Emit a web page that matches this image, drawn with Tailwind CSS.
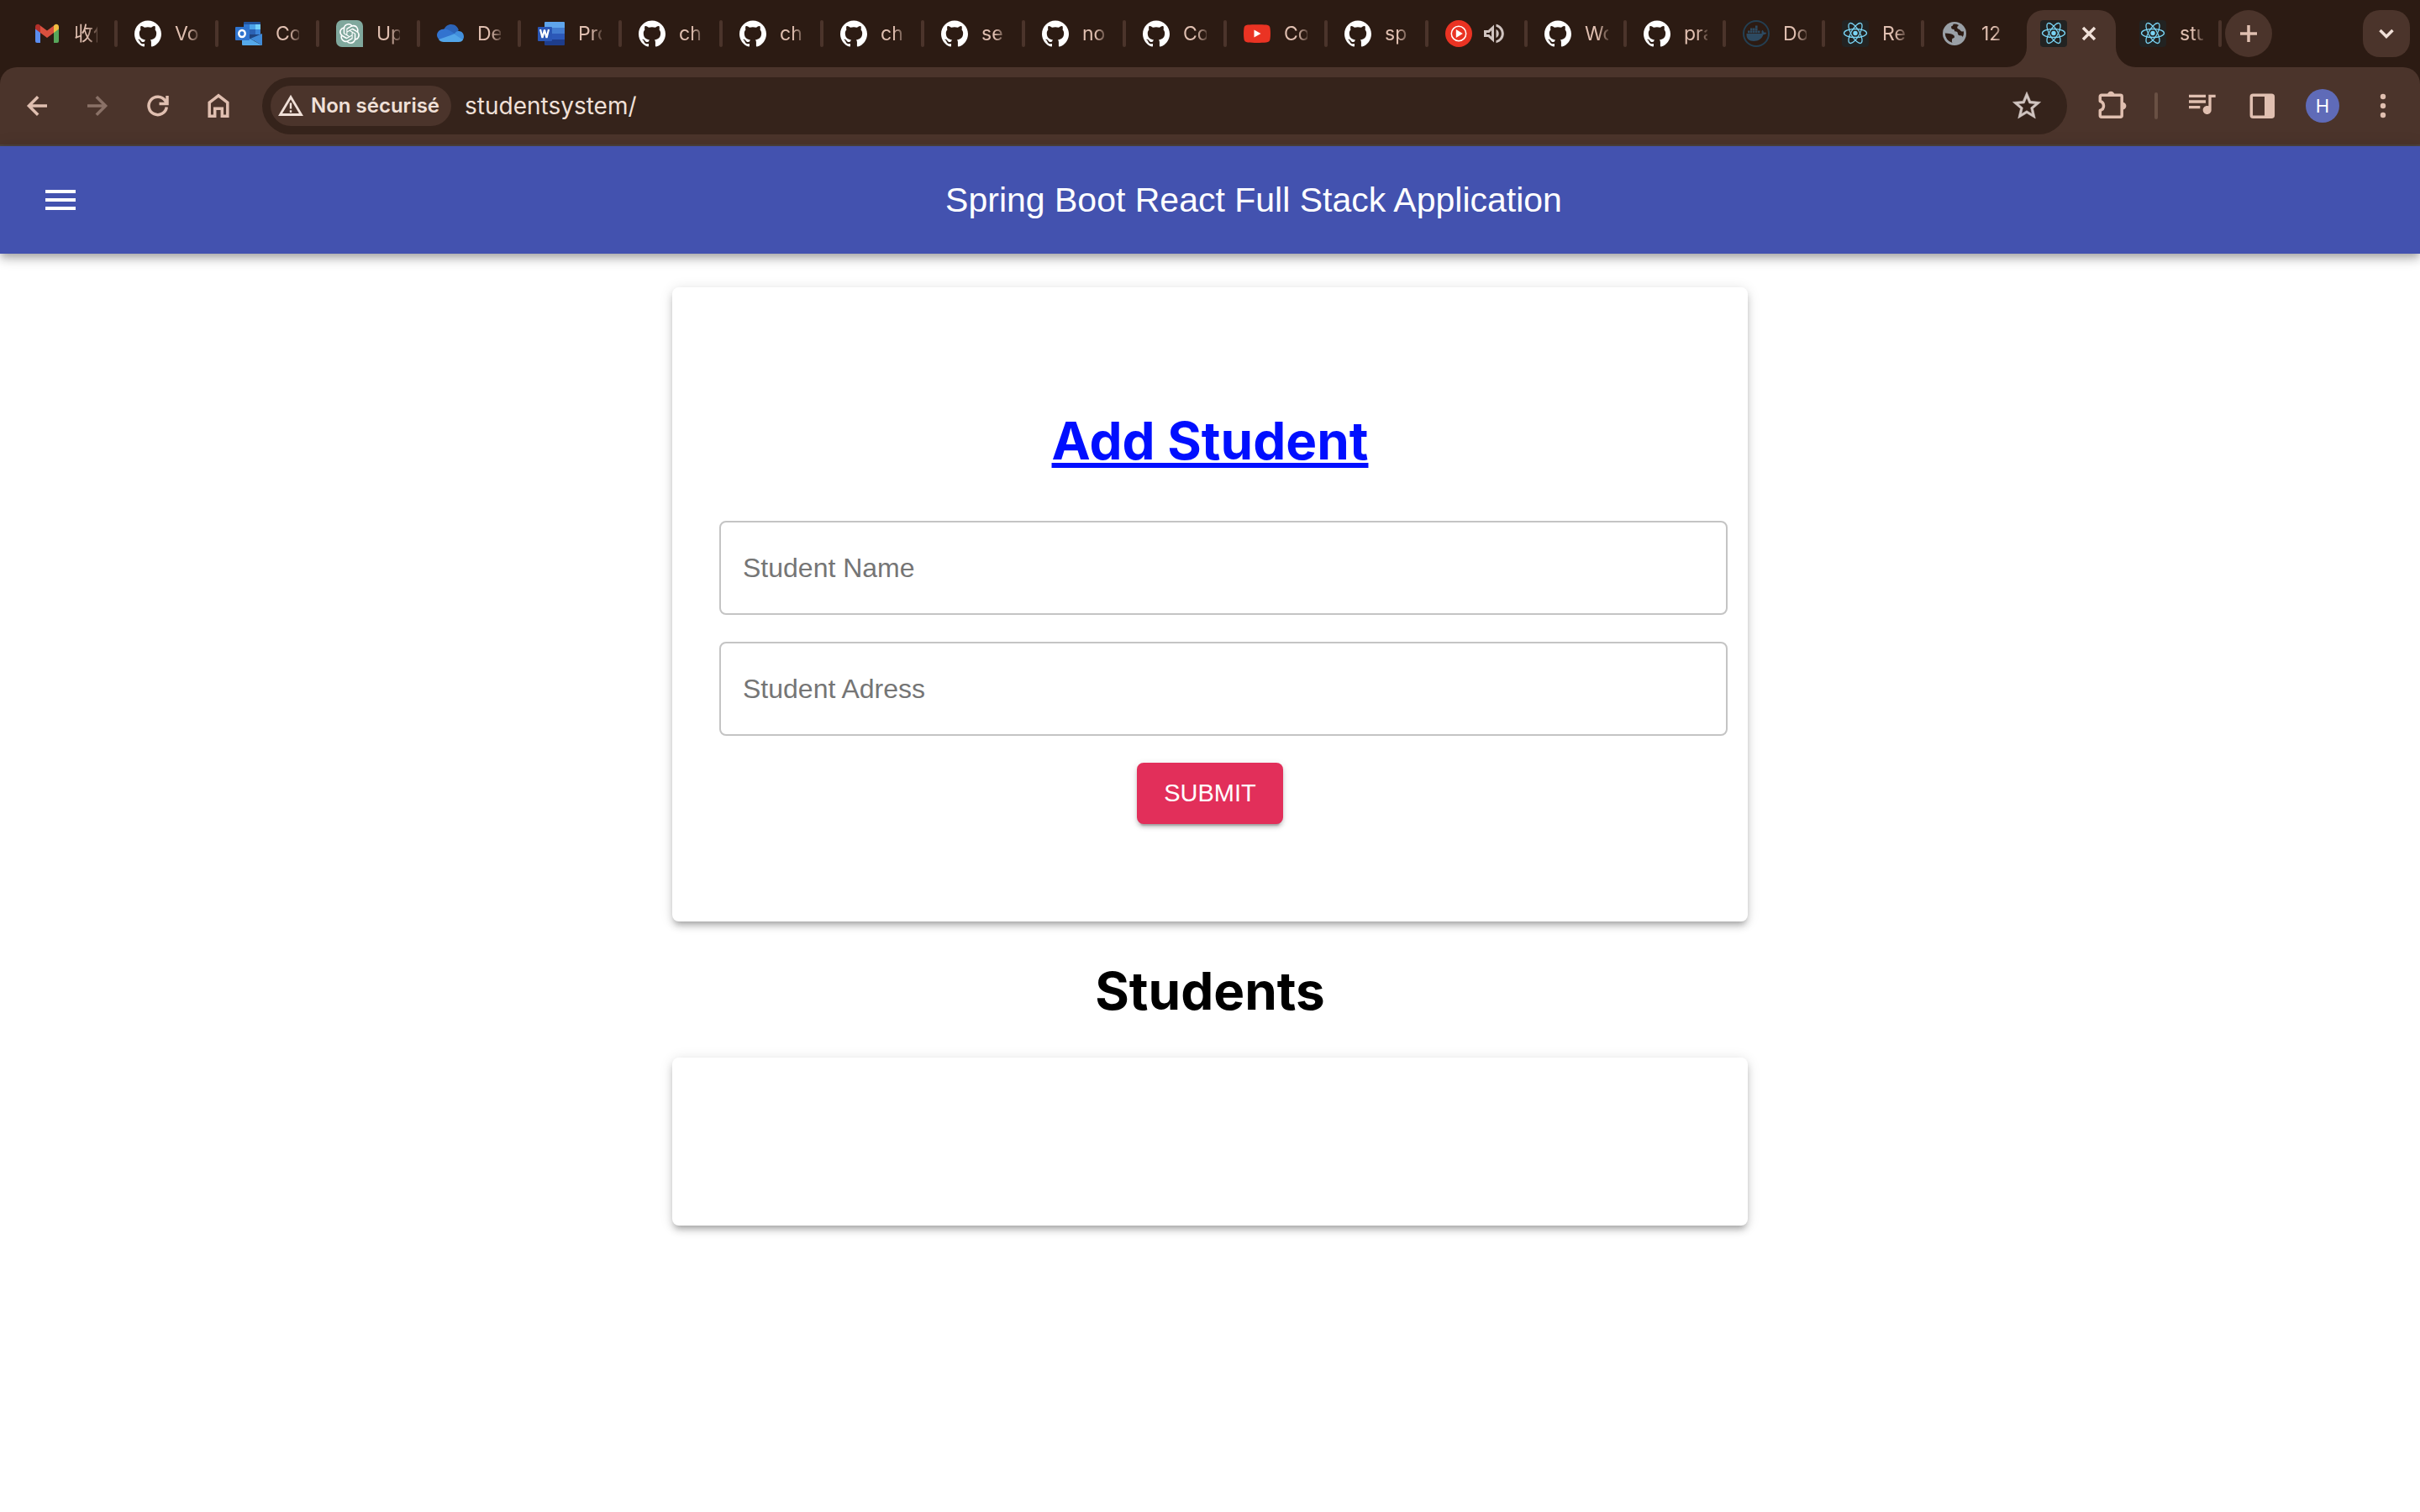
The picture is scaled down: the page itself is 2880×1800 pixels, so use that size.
<!DOCTYPE html>
<html lang="fr">
<head>
<meta charset="utf-8">
<meta name="viewport" content="width=device-width, initial-scale=1">
<title>studentsystem</title>
<script src="https://cdn.jsdelivr.net/npm/@tailwindcss/browser@4"></script>
</head>
<body class="min-h-screen bg-white font-['Inter','Noto_Sans_CJK_SC',sans-serif] text-black">

<!-- Favicon symbols -->
<svg class="hidden" aria-hidden="true">
  <symbol id="gmail" viewBox="0 0 32 32">
    <path fill="#5b8def" d="M2 9l6 4.5V27H4a2 2 0 0 1-2-2z"/>
    <path fill="#57a75b" d="M30 9l-6 4.5V27h4a2 2 0 0 0 2-2z"/>
    <path fill="#d9503f" d="M8 6.5l8 6 8-6v8.500l-8 6-8-6z"/>
    <path fill="#b3302a" d="M8 15L2 10.500V8c0-2.800 3.200-4 5-2.500l1 1z"/>
    <path fill="#f2bd42" d="M24 15l6-4.500V8c0-2.800-3.200-4-5-2.500l-1 1z"/>
  </symbol>
  <symbol id="github" viewBox="0 0 24 24">
    <path fill="#fff" d="M12 .297c-6.63 0-12 5.373-12 12 0 5.303 3.438 9.8 8.205 11.385.6.113.82-.258.82-.577 0-.285-.01-1.04-.015-2.04-3.338.724-4.042-1.61-4.042-1.61C4.422 18.07 3.633 17.7 3.633 17.7c-1.087-.744.084-.729.084-.729 1.205.084 1.838 1.236 1.838 1.236 1.07 1.835 2.809 1.305 3.495.998.108-.776.417-1.305.76-1.605-2.665-.3-5.466-1.332-5.466-5.93 0-1.31.465-2.38 1.235-3.22-.135-.303-.54-1.523.105-3.176 0 0 1.005-.322 3.3 1.23.96-.267 1.98-.399 3-.405 1.02.006 2.04.138 3 .405 2.28-1.552 3.285-1.23 3.285-1.23.645 1.653.24 2.873.12 3.176.765.84 1.23 1.91 1.23 3.22 0 4.61-2.805 5.625-5.475 5.92.42.36.81 1.096.81 2.22 0 1.606-.015 2.896-.015 3.286 0 .315.21.69.825.57C20.565 22.092 24 17.592 24 12.297c0-6.627-5.373-12-12-12"/>
  </symbol>
  <symbol id="outlook" viewBox="0 0 32 32">
    <path fill="#21529b" d="M10 3a1 1 0 0 1 1-1h18a1 1 0 0 1 1 1v2H10z"/>
    <path fill="#2f77d2" d="M10 5h7v6h-7z"/>
    <path fill="#4ba3ea" d="M17 5h7v6h-7z"/>
    <path fill="#73d0fa" d="M24 5h6v6h-6z"/>
    <path fill="#2b62b5" d="M17 11h7v6h-7z"/>
    <path fill="#3c85d8" d="M24 11h6v6h-6z"/>
    <path fill="#1f4480" d="M10 17h14l7 0-11 9-10-5z"/>
    <path fill="#3f8ad8" d="M32 16v14L18 22z"/>
    <path fill="#55a9ea" d="M8 17l24 13H9a1 1 0 0 1-1-1z"/>
    <rect x="0" y="8" width="17" height="16" rx="1" fill="#2f74cf"/>
    <ellipse cx="8" cy="16" rx="3.700" ry="4" fill="none" stroke="#fff" stroke-width="2.500"/>
  </symbol>
  <symbol id="openai" viewBox="0 0 32 32">
    <path fill="#80a89d" d="M7 0h18a7 7 0 0 1 7 7v25H7a7 7 0 0 1-7-7V7a7 7 0 0 1 7-7z"/>
    <svg x="4" y="4" width="24" height="24" viewBox="0 0 24 24"><path fill="#fff" d="M22.2819 9.8211a5.9847 5.9847 0 0 0-.5157-4.9108 6.0462 6.0462 0 0 0-6.5098-2.9A6.0651 6.0651 0 0 0 4.9807 4.1818a5.9847 5.9847 0 0 0-3.9977 2.9 6.0462 6.0462 0 0 0 .7427 7.0966 5.98 5.98 0 0 0 .511 4.9107 6.051 6.051 0 0 0 6.5146 2.9001A5.9847 5.9847 0 0 0 13.2599 24a6.0557 6.0557 0 0 0 5.7718-4.2058 5.9894 5.9894 0 0 0 3.9977-2.9001 6.0557 6.0557 0 0 0-.7475-7.0729zm-9.022 12.6081a4.4755 4.4755 0 0 1-2.8764-1.0408l.1419-.0804 4.7783-2.7582a.7948.7948 0 0 0 .3927-.6813v-6.7369l2.02 1.1686a.071.071 0 0 1 .038.052v5.5826a4.504 4.504 0 0 1-4.4945 4.4944zm-9.6607-4.1254a4.4708 4.4708 0 0 1-.5346-3.0137l.142.0852 4.783 2.7582a.7712.7712 0 0 0 .7806 0l5.8428-3.3685v2.3324a.0804.0804 0 0 1-.0332.0615L9.74 19.9502a4.4992 4.4992 0 0 1-6.1408-1.6464zM2.3408 7.8956a4.485 4.485 0 0 1 2.3655-1.9728V11.6a.7664.7664 0 0 0 .3879.6765l5.8144 3.3543-2.0201 1.1685a.0757.0757 0 0 1-.071 0l-4.8303-2.7865A4.504 4.504 0 0 1 2.3408 7.872zm16.5963 3.8558L13.1038 8.364 15.1192 7.2a.0757.0757 0 0 1 .071 0l4.8303 2.7913a4.4944 4.4944 0 0 1-.6765 8.1042v-5.6772a.79.79 0 0 0-.407-.667zm2.0107-3.0231l-.142-.0852-4.7735-2.7818a.7759.7759 0 0 0-.7854 0L9.409 9.2297V6.8974a.0662.0662 0 0 1 .0284-.0615l4.8303-2.7866a4.4992 4.4992 0 0 1 6.6802 4.66zM8.3065 12.863l-2.02-1.1638a.0804.0804 0 0 1-.038-.0567V6.0742a4.4992 4.4992 0 0 1 7.3757-3.4537l-.142.0805L8.704 5.459a.7948.7948 0 0 0-.3927.6813zm1.0976-2.3654l2.602-1.4998 2.6069 1.4998v2.9994l-2.5974 1.4997-2.6067-1.4997Z"/></svg>
  </symbol>
  <symbol id="onedrive" viewBox="0 0 32 32">
    <path fill="#2c64b8" d="M8 12c1.500-4.500 5-7 9-7 4.500 0 7.800 2.800 8.800 7l-6 6-11-2z"/>
    <path fill="#3273cf" d="M9 10.500c2.200 0 4 .6 5.600 1.600L22 16.500 5 24.500c-3-1.400-5-4-5-6.500 0-4.500 4-7.500 9-7.500z"/>
    <path fill="#428fdc" d="M21 16c1.500-2.500 3.500-3 5-3 3.500 0 6 2.900 6 6.500 0 2-.8 3.700-2 4.800L17 18z"/>
    <path fill="#52a5e8" d="M20.500 16.500L31 23.500c-1.200 1.700-3 2.500-5 2.500H8c-2.600 0-4.600-1-6-3z"/>
  </symbol>
  <symbol id="word" viewBox="0 0 32 32">
    <path fill="#5fa5ec" d="M8 3a1 1 0 0 1 1-1h22a1 1 0 0 1 1 1v6H8z"/>
    <path fill="#427bd0" d="M8 9h24v7H8z"/>
    <path fill="#2c58b8" d="M8 16h24v7H8z"/>
    <path fill="#1e3d8c" d="M8 23h24v6a1 1 0 0 1-1 1H9a1 1 0 0 1-1-1z"/>
    <rect x="0" y="8" width="17" height="17" rx="1" fill="#2a56b5"/>
    <path fill="none" stroke="#fff" stroke-width="2.200" stroke-linejoin="bevel" d="M3 11l2.500 10L8 11.500 10.500 21 13 11"/>
  </symbol>
  <symbol id="youtube" viewBox="0 0 32 32">
    <path fill="#ea3323" d="M5 5.500C11 5 21 5 27 5.500c3 .3 4.300 1.500 4.600 4.500.5 4 .5 8 0 12-.3 3-1.600 4.200-4.600 4.500-6 .6-16 .6-22 0-3-.3-4.300-1.500-4.600-4.500-.5-4-.5-8 0-12C.7 7 2 5.800 5 5.500z"/>
    <path fill="#fff" d="M12.500 11.500v9l8-4.500z"/>
  </symbol>
  <symbol id="ytmusic" viewBox="0 0 32 32">
    <circle cx="16" cy="16" r="16" fill="#ea3323"/>
    <circle cx="16" cy="16" r="8.700" fill="none" stroke="#fff" stroke-width="1.500"/>
    <path fill="#fff" d="M12.800 11v10l8-5z"/>
  </symbol>
  <symbol id="docker" viewBox="0 0 32 32">
    <circle cx="16" cy="16" r="15" fill="none" stroke="#243f52" stroke-width="2"/>
    <path fill="#2d4a61" d="M4.500 16h18.200c-.6-1.600-.4-3 .5-4.200 1.200.8 1.800 1.700 1.900 2.800 1.300-.3 2.500-.1 3.300.5-.7 1.500-2 2.200-3.900 2.200C22.500 22.500 18.500 25 13 25c-5.500 0-9-3-8.500-9zM6 12.500h2.600v2.700H6zm3 0h2.600v2.700H9zm3 0h2.600v2.700H12zm3 0h2.600v2.700H15zm3 0h2.600v2.700H18zm-9-3h2.600v2.700H9zm3 0h2.600v2.700H12zm3 0h2.600v2.700H15zm0-3h2.600v2.700H15z"/>
  </symbol>
  <symbol id="react" viewBox="0 0 32 32">
    <rect width="32" height="32" rx="4" fill="#222322"/>
    <g fill="none" stroke="#7ad4f4" stroke-width="1.300">
      <ellipse cx="16" cy="15.500" rx="13.500" ry="5"/>
      <ellipse cx="16" cy="15.500" rx="13.500" ry="5" transform="rotate(60 16 15.500)"/>
      <ellipse cx="16" cy="15.500" rx="13.500" ry="5" transform="rotate(120 16 15.500)"/>
    </g>
    <circle cx="16" cy="15.500" r="2.700" fill="#7ad4f4"/>
  </symbol>
  <symbol id="globe" viewBox="0 0 32 32">
    <circle cx="16" cy="16" r="14" fill="#9aa0a6"/>
    <path fill="#2c1b13" d="M14.500 4.700c-.2 1.600-.8 2.300-2.300 2.500-.3 2 .2 3.300 2 3.600 1.500.2 2 .9 1.900 2.600 2.400-.2 3.700.8 3.900 2.800.2 1.700 1.800 2 3 2 2 .1 2.500.9 2.700 2a11 11 0 0 0 1.300-7c-1.500.6-3.200.3-4-1-1-1.600-3-1.300-3.600-2.600-.7-1.600.6-2.800 1.700-3.700a11.500 11.500 0 0 0-6.600-1.200zM4.800 15.500c2 .2 4.200.4 6.500.8 2.500.4 4.500 1.500 4.700 3.400.1 1.500-1.500 1.700-2.300 2-.8.400-.4 1.500-.7 2.600-.2.900-.2 1.800.5 2.700A11.500 11.500 0 0 1 4.800 15.500z"/>
  </symbol>
  <symbol id="speaker" viewBox="0 0 24 24">
    <path fill="#d0c4c0" fill-rule="evenodd" d="M0 8h5L12 1.500v21L5 16H0zM3 11v2h3.300l2.700 2.700V8.300L6.300 11zM14.500 7c2.200.8 3.200 2.700 3.200 5s-1 4.200-3.200 5zM14.500.8C19.900 2 23.800 6.500 23.800 12s-3.900 10-9.300 11.200v-2.900c3.700-1.200 6.300-4.400 6.300-8.300s-2.600-7.100-6.300-8.300z"/>
  </symbol>
</svg>

<!-- Browser window -->
<header class="bg-[#2c1b13]">
  <div class="flex h-20 items-center pr-3 pl-5">
    <div id="tabs" role="tablist" class="flex h-20 min-w-0"></div>
    <button aria-label="Nouvel onglet" class="ml-1 grid size-14 shrink-0 place-items-center rounded-full bg-[#4b342b]">
      <svg class="size-5" viewBox="0 0 20 20" fill="none" stroke="#e0bfb0" stroke-width="3.500"><path d="M10 0v20M0 10h20"/></svg>
    </button>
    <button aria-label="Rechercher dans les onglets" class="ml-auto grid size-14 shrink-0 place-items-center rounded-[20px] bg-[#4b342b]">
      <svg class="size-5" viewBox="0 0 20 20" fill="none" stroke="#f0e0d8" stroke-width="3.500"><path d="M2.500 6l7.500 7.500L17.500 6"/></svg>
    </button>
  </div>

  <div class="flex h-[94px] items-center rounded-t-[20px] border-b-2 border-[#4d433f] bg-[#4b342b] px-2 text-[#e0bfb0]">
    <button aria-label="Retour" class="grid h-14 w-[72px] place-items-center"><svg class="size-8" viewBox="0 0 32 32" fill="none" stroke="currentColor" stroke-width="3.500"><path d="M28 16H6.500M17.200 5.200L6.400 16l10.800 10.800"/></svg></button>
    <button aria-label="Avancer" class="grid h-14 w-[72px] place-items-center text-[#8a7167]"><svg class="size-8" viewBox="0 0 32 32" fill="none" stroke="currentColor" stroke-width="3.500"><path d="M4 16h21.500M14.800 5.200L25.600 16 14.800 26.800"/></svg></button>
    <button aria-label="Actualiser" class="grid h-14 w-[72px] place-items-center"><svg class="size-8" viewBox="0 0 32 32" fill="none" stroke="currentColor" stroke-width="3.500"><path d="M26.300 17.500A10.700 10.700 0 1 1 24.500 9.800l2 3M27 4v9.500H17.500"/></svg></button>
    <button aria-label="Accueil" class="grid h-14 w-[72px] place-items-center"><svg class="size-8" viewBox="0 0 32 32" fill="none" stroke="currentColor" stroke-width="3.500"><path d="M5.200 28.200V12L16 3.800 26.800 12v16.200h-6.500V19.200h-8.600v9z"/></svg></button>

    <div class="ml-4 flex h-[68px] min-w-0 flex-1 items-center rounded-full bg-[#35231b] px-[10px] text-[#f0e0d8]">
      <button class="flex h-12 shrink-0 items-center gap-2 rounded-full bg-[#4b342b] px-2 pr-[14px] text-2xl font-semibold">
        <svg class="size-8" viewBox="0 0 32 32" fill="none" stroke="currentColor" stroke-width="2.800"><path d="M16 5.500L28.500 26.500h-25z"/><path d="M16 12.500v7M16 21.300v2.700" stroke-width="2.400"/></svg>
        Non sécurisé
      </button>
      <input type="text" aria-label="Adresse" value="studentsystem/" class="ml-4 min-w-0 flex-1 bg-transparent text-[28px] outline-none">
      <button aria-label="Ajouter aux favoris" class="mr-[18px] shrink-0 text-[#d0c4c0]"><svg class="size-10" viewBox="0 0 24 24" fill="currentColor" stroke="currentColor" stroke-width="0.300"><path d="M22 9.240l-7.190-.62L12 2 9.190 8.630 2 9.240l5.460 4.730L5.820 21 12 17.270 18.180 21l-1.630-7.030L22 9.240zM12 15.400l-3.760 2.270 1-4.280-3.320-2.880 4.380-.38L12 6.100l1.710 4.040 4.380.38-3.320 2.880 1 4.280L12 15.400z"/></svg></button>
    </div>

    <button aria-label="Extensions" class="ml-4 grid h-14 w-[72px] place-items-center"><svg class="size-9 overflow-visible" viewBox="0 0 36 36" fill="none" stroke="currentColor" stroke-width="3.500"><path stroke-linejoin="round" d="M7 5.300H29.500a1.700 1.700 0 0 1 1.700 1.700V29.500a1.700 1.700 0 0 1-1.700 1.700H7a1.700 1.700 0 0 1-1.700-1.700V23.500c2.500-.8 4.200-3 4.200-5.500s-1.700-4.700-4.200-5.500V7A1.700 1.700 0 0 1 7 5.300z"/><path stroke="none" fill="currentColor" d="M14 5a4.200 4.200 0 0 1 8.400 0zM32 13.700a4.400 4.400 0 0 1 0 8.800z"/></svg></button>
    <div class="mx-4 h-8 w-1 rounded-full bg-[#695044]"></div>
    <button aria-label="Contrôle multimédia" class="grid h-14 w-[72px] place-items-center"><svg class="size-10" viewBox="0 2 24 24" fill="currentColor"><path d="M15 6H3v2h12V6zm0 4H3v2h12v-2zM3 16h8v-2H3v2zM17 6v8.180c-.31-.11-.65-.18-1-.18-1.660 0-3 1.340-3 3s1.340 3 3 3 3-1.340 3-3V8h3V6h-5z"/></svg></button>
    <button aria-label="Panneau latéral" class="grid h-14 w-[72px] place-items-center"><svg class="size-8" viewBox="0 0 32 32"><rect x="3.300" y="3.300" width="26" height="26" rx="2" fill="none" stroke="currentColor" stroke-width="3.500"/><path fill="currentColor" d="M19 3h10v26H19z"/></svg></button>
    <button aria-label="Profil" class="grid h-14 w-[72px] place-items-center"><span class="grid size-10 place-items-center rounded-full bg-[#5f6bb8] text-[22px] text-white">H</span></button>
    <button aria-label="Menu" class="grid h-14 w-[72px] place-items-center"><svg class="size-8" viewBox="0 0 32 32" fill="currentColor"><circle cx="16" cy="5" r="3.200"/><circle cx="16" cy="16" r="3.200"/><circle cx="16" cy="27" r="3.200"/></svg></button>
  </div>
</header>

<!-- Application -->
<div class="flex h-32 items-center bg-[#4352af] px-6 pr-12 font-['Liberation_Sans',Arial,sans-serif] text-white shadow-[0_4px_8px_-2px_rgba(0,0,0,0.2),0_8px_10px_0_rgba(0,0,0,0.14),0_2px_20px_0_rgba(0,0,0,0.12)]">
  <button aria-label="menu" class="mr-8 p-6">
    <svg class="size-12" viewBox="0 0 24 24" fill="currentColor"><path d="M3 18h18v-2H3v2zm0-5h18v-2H3v2zm0-7v2h18V6H3z"/></svg>
  </button>
  <p class="flex-1 text-center text-[41px] leading-[64px]">Spring Boot React Full Stack Application</p>
</div>

<main class="mx-auto max-w-[1280px] pt-10">
  <section class="rounded-lg bg-white px-10 py-[100px] shadow-[0_6px_6px_-4px_rgba(0,0,0,0.2),0_6px_8px_0_rgba(0,0,0,0.14),0_2px_16px_0_rgba(0,0,0,0.12)]">
    <h1 class="mt-[43px] text-center text-[62px] leading-[80px] font-bold text-[#000fff] underline decoration-[6px] underline-offset-4">Add Student</h1>
    <form class="mt-[55px]">
      <div class="-mr-4 ml-4 flex flex-col gap-8 font-['Liberation_Sans',Arial,sans-serif] text-[32px]">
        <input type="text" aria-label="Student Name" placeholder="Student Name" class="h-28 w-full rounded-lg border-2 border-[#c4c4c4] px-[26px] placeholder-[#757575]">
        <input type="text" aria-label="Student Adress" placeholder="Student Adress" class="h-28 w-full rounded-lg border-2 border-[#c4c4c4] px-[26px] placeholder-[#757575]">
      </div>
      <div class="mt-8 mb-4 flex justify-center">
        <button type="button" class="h-[73px] w-[174px] rounded-lg bg-[#e22f5a] font-['Liberation_Sans',Arial,sans-serif] text-[29px] text-white shadow-[0_6px_2px_-4px_rgba(0,0,0,0.2),0_4px_4px_0_rgba(0,0,0,0.14),0_2px_10px_0_rgba(0,0,0,0.12)]">SUBMIT</button>
      </div>
    </form>
  </section>

  <h1 class="mt-[43px] mb-[39px] text-center text-[62px] leading-[80px] font-bold">Students</h1>

  <section aria-label="Students" class="rounded-lg bg-white px-10 py-[100px] shadow-[0_6px_6px_-4px_rgba(0,0,0,0.2),0_6px_8px_0_rgba(0,0,0,0.14),0_2px_16px_0_rgba(0,0,0,0.12)]"></section>
</main>

<script>
  const wide = 'relative flex w-[120px] min-w-0 items-center pl-5 text-left';
  const narrow = 'relative flex w-[118px] min-w-0 items-center pl-5 text-left';
  const tabs = [
    ['gmail', '收件'], ['github', 'Vo'], ['outlook', 'Co'], ['openai', 'Up'], ['onedrive', 'De'],
    ['word', 'Pro'], ['github', 'ch'], ['github', 'ch'], ['github', 'ch'], ['github', 'se'],
    ['github', 'no'], ['github', 'Co'], ['youtube', 'Co'], ['github', 'sp'], ['ytmusic', null],
    ['github', 'Wo'], ['github', 'pra'], ['docker', 'Do'], ['react', 'Re'], ['globe', '12'],
    ['react', 'active'], ['react', 'stu'],
  ];
  const icon = (id, cls) => `<svg class="${cls}" aria-hidden="true"><use href="#${id}"/></svg>`;
  document.getElementById('tabs').innerHTML = tabs.map(([id, label], i) => {
    const cls = i < 14 ? wide : narrow;
    if (label === 'active') {
      return `<div role="tab" aria-selected="true" class="${cls}">
        <svg class="absolute bottom-0 -left-5 h-[68px] w-[154px]" viewBox="0 0 154 68" fill="#4b342b"><path d="M0 68a24 24 0 0 0 24-24V20a20 20 0 0 1 20-20H110a20 20 0 0 1 20 20V44a24 24 0 0 0 24 24z"/></svg>
        ${icon(id, 'relative size-8 shrink-0')}
        <button aria-label="Fermer" class="relative ml-4"><svg class="size-5" viewBox="0 0 20 20" fill="none" stroke="#f0e0d8" stroke-width="3.500"><path d="M3 3l14 14M17 3L3 17"/></svg></button>
      </div>`;
    }
    const text = label === null
      ? icon('speaker', 'ml-[14px] size-6 shrink-0')
      : `<span class="ml-4 w-7 shrink-0 overflow-hidden text-[23px] leading-8 whitespace-nowrap text-[#e0bfb0] [mask-image:linear-gradient(to_right,#000_55%,rgba(0,0,0,0.25))]">${label}</span>`;
    const rule = label === '12' ? '' : '<span class="absolute right-0 h-8 w-1 rounded-full bg-[#4b342b]"></span>';
    return `<button role="tab" aria-selected="false" class="${cls}">${icon(id, 'size-8 shrink-0')}${text}${rule}</button>`;
  }).join('');
</script>
</body>
</html>
